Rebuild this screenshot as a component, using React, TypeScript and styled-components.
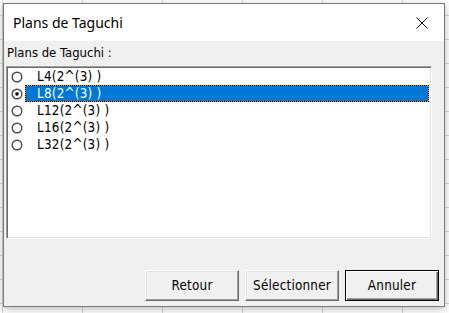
import React from 'react';
import styled, { createGlobalStyle } from 'styled-components';

const GlobalStyle = createGlobalStyle`
  html, body {
    margin: 0;
    padding: 0;
  }

  body {
    width: 449px;
    height: 313px;
    overflow: hidden;
    background-color: #ffffff;
    background-image:
      repeating-linear-gradient(to right, transparent 0 2px, #d6d6d6 2px 3px, transparent 3px 80px),
      repeating-linear-gradient(to bottom, transparent 0 15px, #d6d6d6 15px 16px, transparent 16px 24px);
  }
`;

const Window = styled.div`
  margin: 3px 0 0 3px;
  width: 440px;
  height: 302px;
  border: 1px solid #7a7a7a;
  display: flex;
  flex-direction: column;
  box-shadow: 0 2px 8px rgba(0, 0, 0, 0.28);
  font-family: 'DejaVu Sans Condensed', 'DejaVu Sans', sans-serif;
  font-size: 13px;
  color: #000;
`;

const TitleBar = styled.div`
  height: 37px;
  flex: none;
  background: #ffffff;
  display: flex;
  align-items: center;
  justify-content: space-between;
  padding-left: 9px;
`;

const Title = styled.span`
  font-family: 'Noto Sans', 'Liberation Sans', sans-serif;
  font-size: 14px;
  color: #000;
  margin-top: -1px;
`;

const CloseButton = styled.div`
  width: 40px;
  height: 37px;
  margin-right: 2px;
  display: flex;
  align-items: center;
  justify-content: center;
`;

const Body = styled.div`
  flex: 1;
  background: #f0f0f0;
  display: flex;
  flex-direction: column;
  padding: 4px 5px 5px 2px;
`;

const Label = styled.div`
  height: 16px;
  line-height: 16px;
  padding-left: 1px;
`;

const ListBox = styled.div`
  margin-top: 5px;
  width: 419px;
  height: 170px;
  background: #ffffff;
  border-top: 1px solid #a0a0a0;
  border-left: 1px solid #a0a0a0;
  border-right: 1px solid #ffffff;
  border-bottom: 1px solid #ffffff;
  box-shadow: inset 1px 1px 0 #696969, inset -1px -1px 0 #e3e3e3;
  padding: 1px 2px 0 3px;
  display: flex;
  flex-direction: column;
`;

const Row = styled.div`
  height: 17px;
  display: flex;
  align-items: center;
`;

const RadioBox = styled.div`
  width: 12px;
  height: 17px;
  display: flex;
  align-items: center;
  justify-content: center;
  margin-left: 1px;
`;

const ItemText = styled.div<{ selected?: boolean }>`
  flex: 1;
  height: 17px;
  box-sizing: border-box;
  margin-left: 2px;
  padding-left: 11px;
  line-height: 15px;
  font-size: 13.4px;
  letter-spacing: 0.2px;
  white-space: pre;
  border: 1px solid transparent;
  color: ${(p) => (p.selected ? '#ffffff' : '#000000')};
  ${(p) =>
    p.selected &&
    `
    border: 1px dotted #000;
    background: linear-gradient(#0078d7, #0078d7) padding-box,
      linear-gradient(#f0962a, #f0962a) border-box;
  `}
`;

const Spacer = styled.div`
  flex: 1;
`;

const ButtonRow = styled.div`
  display: flex;
  justify-content: flex-end;
  gap: 6px;
`;

const Button = styled.div<{ isDefault?: boolean }>`
  width: 94px;
  height: 31px;
  box-sizing: border-box;
  display: flex;
  align-items: center;
  justify-content: center;
  background: #f0f0f0;
  font-size: 13.4px;
  letter-spacing: 0.2px;
  border-top: 1px solid #ffffff;
  border-left: 1px solid #ffffff;
  border-right: 1px solid #696969;
  border-bottom: 1px solid #696969;
  box-shadow: inset -1px -1px 0 #a0a0a0, inset 1px 1px 0 #e3e3e3;
  ${(p) =>
    p.isDefault &&
    `
    border: 1px solid #000;
    box-shadow: inset 1px 1px 0 #ffffff, inset -1px -1px 0 #696969, inset -2px -2px 0 #a0a0a0;
  `}
`;

const Radio: React.FC<{ checked: boolean }> = ({ checked }) => (
  <svg width="12" height="12" viewBox="0 0 12 12">
    <circle cx="6" cy="6" r="4.8" fill="#fff" stroke="#4a4a4a" strokeWidth="1.4" />
    {checked && <circle cx="6" cy="6" r="1.8" fill="#000" />}
  </svg>
);

const items = ['L4(2^(3) )', 'L8(2^(3) )', 'L12(2^(3) )', 'L16(2^(3) )', 'L32(2^(3) )'];

export default function App() {
  const selected = 1;
  return (
    <>
      <GlobalStyle />
      <Window>
        <TitleBar>
          <Title>Plans de Taguchi</Title>
          <CloseButton>
            <svg width="12" height="12" viewBox="0 0 12 12">
              <path d="M0.5 0.5 L11.5 11.5 M11.5 0.5 L0.5 11.5" stroke="#000" strokeWidth="1" />
            </svg>
          </CloseButton>
        </TitleBar>
        <Body>
          <Label>Plans de Taguchi :</Label>
          <ListBox>
            {items.map((item, i) => (
              <Row key={item}>
                <RadioBox>
                  <Radio checked={i === selected} />
                </RadioBox>
                <ItemText selected={i === selected}>{item}</ItemText>
              </Row>
            ))}
          </ListBox>
          <Spacer />
          <ButtonRow>
            <Button>Retour</Button>
            <Button>Sélectionner</Button>
            <Button isDefault>Annuler</Button>
          </ButtonRow>
        </Body>
      </Window>
    </>
  );
}
